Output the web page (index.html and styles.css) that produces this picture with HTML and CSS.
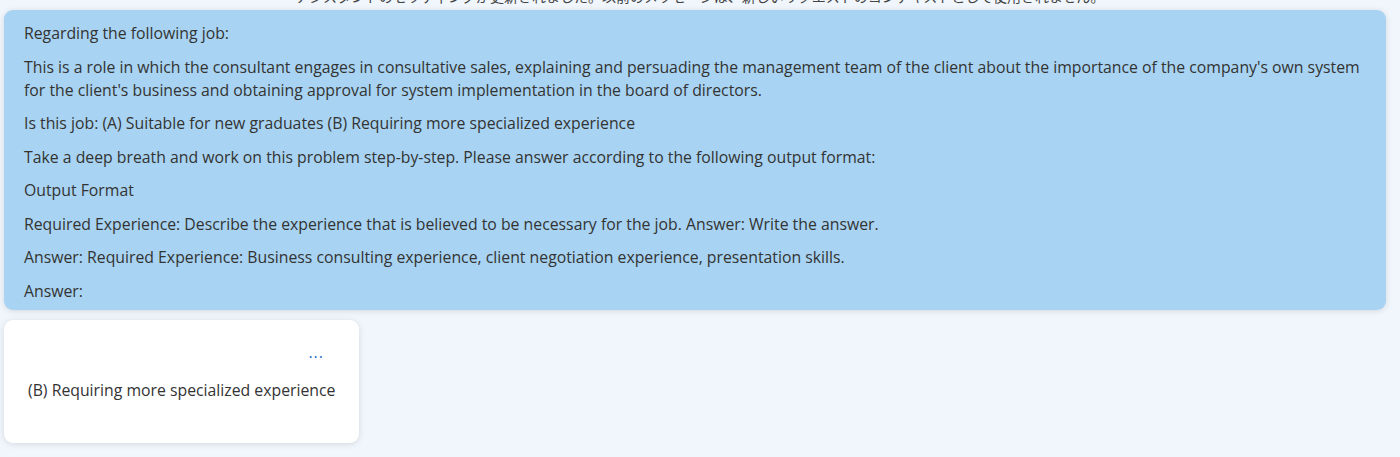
FILE: index.html
```html
<!DOCTYPE html>
<html lang="en">
<head>
<meta charset="utf-8">
<link rel="stylesheet" href="styles.css">
</head>
<body>
<div class="notice">アシスタントのセッティングが更新されました。以前のメッセージは、新しいリクエストのコンテキストとして使用されません。</div>
<div class="thread">
  <div class="bubble user">
    <p>Regarding the following job:</p>
    <p>This is a role in which the consultant engages in consultative sales, explaining and persuading the management team of the client about the importance of the company's own system for the client's business and obtaining approval for system implementation in the board of directors.</p>
    <p>Is this job: (A) Suitable for new graduates (B) Requiring more specialized experience</p>
    <p>Take a deep breath and work on this problem step-by-step. Please answer according to the following output format:</p>
    <p>Output Format</p>
    <p>Required Experience: Describe the experience that is believed to be necessary for the job. Answer: Write the answer.</p>
    <p>Answer: Required Experience: Business consulting experience, client negotiation experience, presentation skills.</p>
    <p>Answer:</p>
  </div>
  <div class="bubble bot">
    <div class="more">···</div>
    <p class="answer">(B) Requiring more specialized experience</p>
  </div>
</div>
</body>
</html>
```
FILE: styles.css
```css
html, body {
  margin: 0;
  padding: 0;
}
body {
  background: #f1f6fd;
  font-family: "Open Sans", "Noto Sans", "Noto Sans CJK JP", sans-serif;
  color: #333;
  height: 457px;
  overflow: hidden;
}
.notice {
  font-family: "Noto Sans CJK JP", sans-serif;
  font-size: 14px;
  line-height: 20px;
  text-align: center;
  color: #444;
  margin-top: -14px;
  height: 20px;
}
.thread {
  display: flex;
  flex-direction: column;
  align-items: flex-start;
  gap: 10px;
  padding: 4px 14px 0 4px;
}
.bubble {
  border-radius: 9px;
  box-shadow: 0 1px 6px rgba(0, 0, 0, 0.12);
}
.bubble p {
  margin: 0;
  font-size: 15.8px;
  line-height: 23px;
}
.user {
  align-self: stretch;
  background: #a8d3f2;
  padding: 12px 20px 7px 20px;
  display: flex;
  flex-direction: column;
  gap: 10.5px;
}
.bot {
  background: #ffffff;
  width: 355px;
  height: 123px;
  box-sizing: border-box;
  padding: 27px 16px 0 24px;
}
.answer {
  white-space: nowrap;
}
.more {
  text-align: right;
  color: #2a6fc9;
  font-size: 16px;
  line-height: 20px;
  padding-right: 19px;
  margin-bottom: 12px;
  letter-spacing: 1px;
}
```
